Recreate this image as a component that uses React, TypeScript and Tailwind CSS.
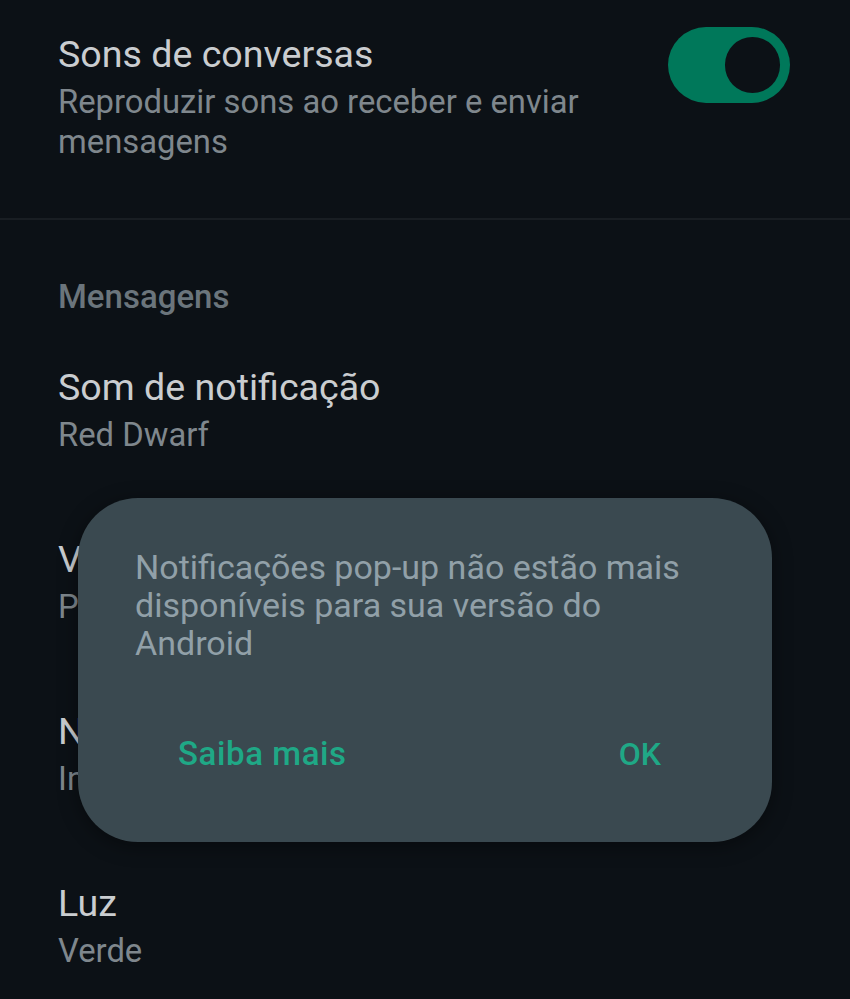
const ITEMS = [
  { title: "Som de notificação", sub: "Red Dwarf" },
  { title: "Vibração", sub: "Padrão" },
  { title: "Notificação pop-up", sub: "Indisponível" },
  { title: "Luz", sub: "Verde" },
];

function Toggle() {
  return (
    <div className="mt-[-5px] flex h-[76px] w-[122px] shrink-0 items-center justify-end rounded-full bg-[#00785a] pr-[10px]">
      <div className="h-[56px] w-[55px] rounded-full bg-[#0c1116]" />
    </div>
  );
}

export default function App() {
  return (
    <div className="relative h-[999px] w-[850px] overflow-hidden bg-[#0c1116] font-['Roboto',sans-serif]">
      {/* Conversation sounds */}
      <div className="flex items-start justify-between pl-[58px] pr-[60px] pt-[32px] pb-[56px]">
        <div>
          <p className="text-[37.6px] leading-[44px] text-[#cacdd0]">Sons de conversas</p>
          <p className="mt-[6px] w-[580px] text-[32.8px] leading-[40px] text-[#7f878d]">
            Reproduzir sons ao receber e enviar mensagens
          </p>
        </div>
        <Toggle />
      </div>

      <div className="h-[2px] bg-[#191e23]" />

      {/* Messages section */}
      <div className="px-[58px] pt-[57px] pb-[7px]">
        <p className="text-[33px] font-medium leading-[40px] text-[#6b757c]">Mensagens</p>
      </div>

      {ITEMS.map(item => (
        <div key={item.title} className="px-[58px] py-[41px]">
          <p className="text-[37.6px] leading-[44px] text-[#cacdd0]">{item.title}</p>
          <p className="mt-[6px] text-[32.8px] leading-[40px] text-[#7f878d]">{item.sub}</p>
        </div>
      ))}

      {/* Dialog */}
      <div className="absolute left-[78px] top-[498px] h-[344px] w-[694px] rounded-[60px] bg-[#3a4950] shadow-[0_4px_20px_rgba(0,0,0,0.4)]">
        <p className="pl-[57px] pr-[60px] pt-[50px] text-[34px] leading-[38px] text-[#91a0a8]">
          Notificações pop-up não estão mais disponíveis para sua versão do Android
        </p>
        <div className="mt-[72px] flex items-center justify-between pl-[100px] pr-[111px]">
          <span className="text-[33px] font-medium leading-[40px] tracking-[0.6px] text-[#1fa886]">Saiba mais</span>
          <span className="text-[32px] font-medium leading-[40px] text-[#1fa886]">OK</span>
        </div>
      </div>
    </div>
  );
}
